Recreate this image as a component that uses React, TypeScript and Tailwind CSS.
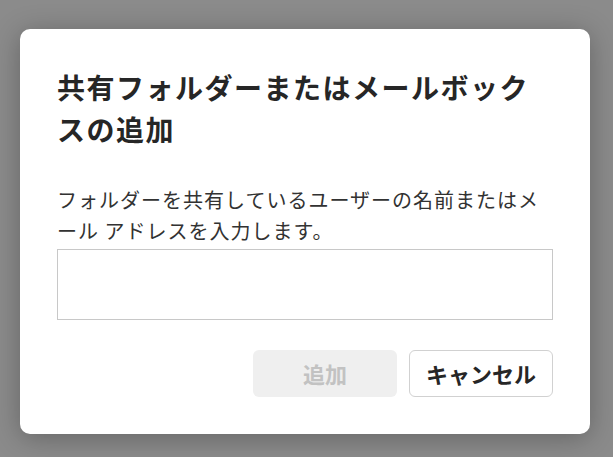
export default function App() {
  return (
    <div className="h-[457px] w-full overflow-hidden bg-[#8b8b8b] pt-[29px] pl-[20px] font-['Noto_Sans_CJK_JP','Noto_Sans',sans-serif]">
      {/* Dialog */}
      <div className="flex w-[570px] flex-col rounded-[10px] bg-white p-[37px] shadow-[0_4px_28px_rgba(0,0,0,0.28)]">
        <h1 className="text-[28px] leading-[42px] font-bold tracking-[1.5px] text-[#262626]">
          共有フォルダーまたはメールボックスの追加
        </h1>
        <p className="mt-[34px] text-[20px] leading-[31px] tracking-[1px] text-[#323232]">
          フォルダーを共有しているユーザーの名前またはメール アドレスを入力します。
        </p>
        <input
          type="text"
          className="mt-[3px] h-[71px] w-full border border-[#c8c8c8] px-3 text-[18px] outline-none"
        />
        <div className="mt-[30px] flex justify-end gap-[12px]">
          <button
            disabled
            className="h-[47px] w-[144px] rounded-[6px] bg-[#efefef] text-[22px] font-bold text-[#c2c2c2]"
          >
            追加
          </button>
          <button className="h-[47px] w-[144px] rounded-[6px] border border-[#d1d1d1] bg-white text-[22px] font-bold text-[#262626]">
            キャンセル
          </button>
        </div>
      </div>
    </div>
  );
}
